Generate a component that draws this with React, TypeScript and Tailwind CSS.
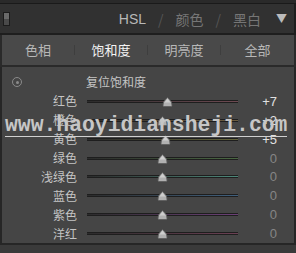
const rows = [
  { label: "红色", value: "+7", pos: 0.53, tint: "#6e4a52" },
  { label: "橙色", value: "+2", pos: 0.5, tint: "#6e5e40" },
  { label: "黄色", value: "+5", pos: 0.52, tint: "#66663c" },
  { label: "绿色", value: "0", pos: 0.5, tint: "#4a6842" },
  { label: "浅绿色", value: "0", pos: 0.5, tint: "#4e887a" },
  { label: "蓝色", value: "0", pos: 0.5, tint: "#40607e" },
  { label: "紫色", value: "0", pos: 0.5, tint: "#6c4078" },
  { label: "洋红", value: "0", pos: 0.5, tint: "#6c4054" },
];

const tabs = ["色相", "饱和度", "明亮度", "全部"];

function Thumb({ pos }: { pos: number }) {
  return (
    <svg
      width="11"
      height="10"
      viewBox="0 0 11 10"
      className="absolute top-[-4px]"
      style={{ left: `calc(${pos * 100}% - 5.5px)` }}
    >
      <path d="M5.5 0.5 L9.5 5 L10 8.5 Q10 9.5 9 9.5 L2 9.5 Q1 9.5 1 8.5 L1.5 5 Z" fill="#b0b0b0" stroke="#5a5a5a" strokeWidth="0.8" />
      <path d="M5.5 1.5 L8.5 5.5 L2.5 5.5 Z" fill="#cecece" />
    </svg>
  );
}

export default function App() {
  return (
    <div className="relative flex h-[253px] w-[296px] flex-col overflow-hidden bg-[#3a3a3a] font-['Noto_Sans_CJK_SC',sans-serif]">
      <div className="h-[4px] border-b border-[#1a1a1a] bg-[#2a2a2a]" />
      <header className="flex h-[29px] items-center border-r-2 border-[#1e1e1e] bg-[#313131] pl-[3px] pr-[7px]">
        <div className="flex h-[14px] w-[7px] flex-col border border-[#1c1c1c]">
          <div className="h-1/2 bg-[#6a6a6a]" />
          <div className="h-1/2 bg-[#4a4a4a]" />
        </div>
        <div className="ml-auto flex items-center gap-[12px] text-[14px] leading-none text-[#767676]">
          <span className="font-['Liberation_Sans',sans-serif] text-[14px] text-[#b8b8b8]">HSL</span>
          <span className="text-[#555555]">/</span>
          <span>颜色</span>
          <span className="text-[#555555]">/</span>
          <span>黑白</span>
          <span className="ml-[3px] text-[11px] text-[#bcbcbc]">▼</span>
        </div>
      </header>
      <div className="h-[2px] bg-[#1e1e1e]" />
      <nav className="grid h-[30px] grid-cols-4 border-x-2 border-[#2a2a2a] bg-[#494949] text-[13px]">
        {tabs.map((t, i) => (
          <div key={t} className="flex items-center">
            <span className={`flex-1 text-center ${i === 1 ? "text-[#f4f4f4]" : "text-[#b8b8b8]"}`}>{t}</span>
            {i < 3 && <span className="h-[10px] w-px bg-[#3e3e3e]" />}
          </div>
        ))}
      </nav>
      <div className="h-[2px] bg-[#2a2a2a]" />
      <main className="flex h-[178px] flex-col border-x-2 border-b-2 border-[#262626] bg-[#454545] pt-[6px]">
        <div className="flex h-[19px] items-center">
          <div className="ml-[10px] flex h-[10px] w-[10px] items-center justify-center rounded-full border border-[#8a8a8a]">
            <div className="h-[3px] w-[3px] rounded-full bg-[#8a8a8a]" />
          </div>
          <span className="ml-[64px] text-[12px] text-[#c4c4c4]">复位饱和度</span>
        </div>
        {rows.map((r) => (
          <div key={r.label} className="flex h-[19px] items-center">
            <span className="w-[75px] text-right text-[12px] leading-none text-[#c4c4c4]">{r.label}</span>
            <div className="relative ml-[10px] h-[3px] w-[151px] border-y border-[#1e1e1e]" style={{ background: `linear-gradient(to right, #2c2c2c, ${r.tint})` }}>
              <Thumb pos={r.pos} />
            </div>
            <span className={`w-[39px] text-right font-['Liberation_Sans',sans-serif] text-[13px] leading-none ${r.value === "0" ? "text-[#858585]" : "text-[#e0e0e0]"}`}>
              {r.value}
            </span>
          </div>
        ))}
      </main>
      <div className="absolute left-[5px] top-[115px] border-b border-[#d0d0d0] font-['Liberation_Mono',monospace] text-[21.4px] font-bold leading-[21px] text-[#c6c6c6]">
        www.haoyidiansheji.com
      </div>
    </div>
  );
}
